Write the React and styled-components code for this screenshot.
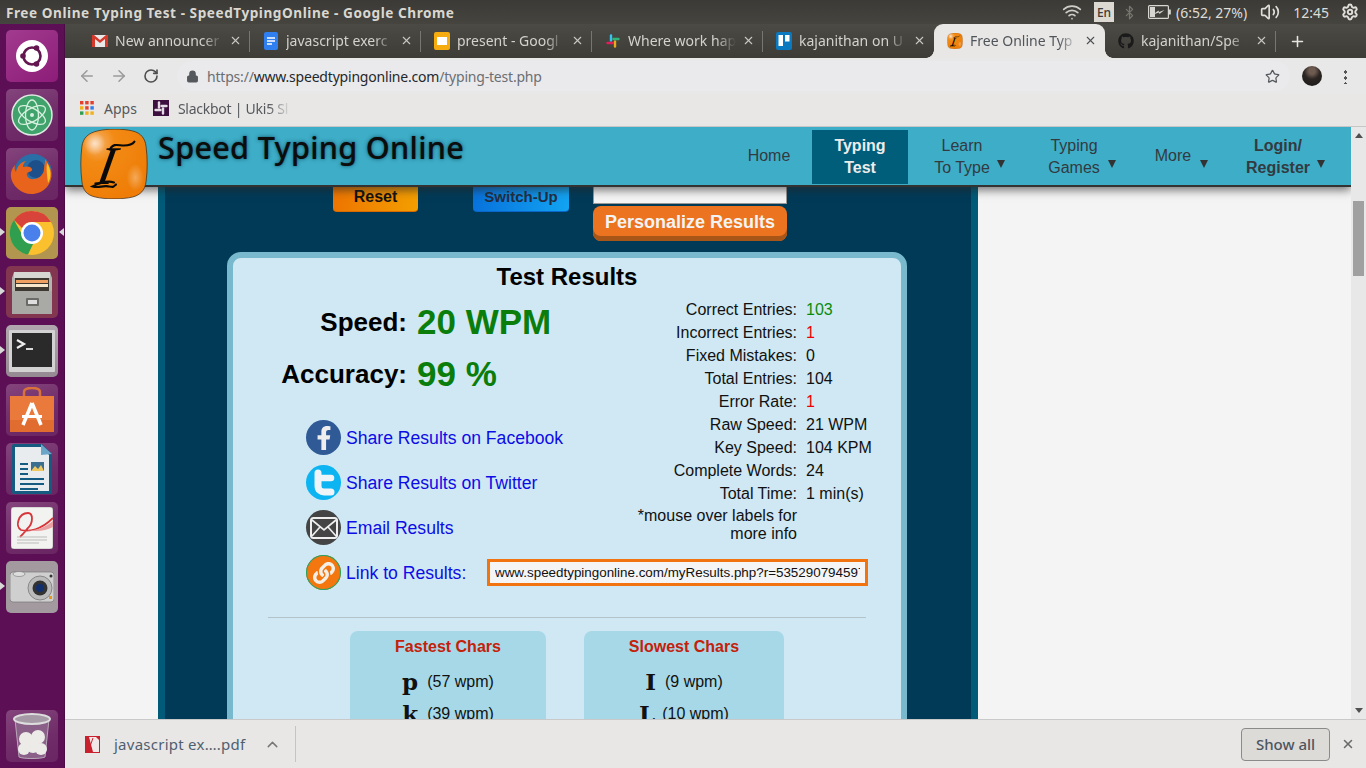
import React from "react";
import styled, { createGlobalStyle } from "styled-components";
import { ArrowLeft, ArrowRight, RotateCw, Lock, Star, ChevronUp, X, Plus, Wifi, Bluetooth, Volume2, Settings } from "lucide-react";
import { FaGithub, FaFacebookF, FaLink } from "react-icons/fa";

const Global = createGlobalStyle`
  html, body { margin: 0; padding: 0; height: 768px; overflow: hidden; background: #5c0f55; }
  * { box-sizing: border-box; }
`;
const UI = `"Noto Sans", "Open Sans", sans-serif`;
const WEB = `"Liberation Sans", Arial, sans-serif`;

const Screen = styled.div`width:1366px;height:768px;display:flex;flex-direction:column;overflow:hidden;font-family:${WEB};`;
const TitleBar = styled.div`height:24px;flex:none;display:flex;align-items:center;padding-left:6px;background:linear-gradient(#3b3a36,#45443f);color:#d9d7d0;font:700 13.6px ${UI};`;
const TitleText = styled.div`flex:1;letter-spacing:.55px;`;
const Indicators = styled.div`display:flex;align-items:center;height:24px;color:#dedcd6;font:400 14px ${UI};`;
const LangBox = styled.div`width:20px;height:20px;margin:0 8px 0 12px;background:#dcd9d3;color:#3c3b37;font-size:12px;font-weight:500;display:flex;align-items:center;justify-content:center;`;
const IndicatorGap = styled.span`width:${p=>p.$w}px;flex:none;`;
const Clock = styled.span`margin:0 12px 0 13px;`;
const BatteryText = styled.span`margin-left:5px;margin-right:13px;`;
const Desktop = styled.div`flex:1;display:flex;min-height:0;`;
const Launcher = styled.div`width:65px;flex:none;background:#5c0f55;border-right:1px solid #4b0c46;display:flex;flex-direction:column;align-items:flex-start;gap:7px;padding:6px 0 6px 6px;`;
const Tile = styled.div`
  width:52px;height:52px;border-radius:5px;flex:none;position:relative;display:flex;align-items:center;justify-content:center;
  background:${p=>p.$bg||"linear-gradient(160deg,#84447c,#6f2c68 60%,#6a2563)"};
  margin-top:${p=>p.$bottom?"auto":"0"};
  ${p=>p.$pip?`&::before{content:"";position:absolute;left:-6px;top:21px;border-left:5px solid #d8d8d8;border-top:4.5px solid transparent;border-bottom:4.5px solid transparent;}`:""}
  ${p=>p.$focus?`&::after{content:"";position:absolute;right:-6px;top:21px;border-right:5px solid #d8d8d8;border-top:4.5px solid transparent;border-bottom:4.5px solid transparent;}`:""}
`;
const Browser = styled.div`flex:1;display:flex;flex-direction:column;min-width:0;`;
const TabStrip = styled.div`height:34px;flex:none;display:flex;padding-left:14px;background:linear-gradient(#4b4a44,#3d3c37);`;
const Tab = styled.div`
  width:171px;flex:none;height:34px;position:relative;display:flex;align-items:center;padding-left:13px;padding-bottom:1px;font:400 14px ${UI};
  color:${p=>p.$active?"#50555b":"#d3d2cc"};
  ${p=>p.$active?`background:#e8e7e5;border-radius:9px 9px 0 0;
    &::before,&::after{content:"";position:absolute;bottom:0;width:8px;height:8px;}
    &::before{left:-8px;background:radial-gradient(circle at 0 0,transparent 7.5px,#e8e7e5 8px);}
    &::after{right:-8px;background:radial-gradient(circle at 100% 0,transparent 7.5px,#e8e7e5 8px);}`:""}
  ${p=>p.$sep?`&::after{content:"";position:absolute;right:0;top:7px;height:21px;width:1px;background:#77766f;}`:""}
`;
const TabIcon = styled.span`width:16px;height:18px;flex:none;display:flex;align-items:center;justify-content:center;`;
const TabLabel = styled.span`
  width:108px;flex:none;margin-left:7px;white-space:nowrap;overflow:hidden;
  mask-image:linear-gradient(90deg,#000 82%,transparent 100%);
`;
const TabClose = styled.span`display:flex;margin-left:6px;color:${p=>p.$active?"#4c4f54":"#c9c8c2"};`;
const NewTab = styled.div`margin-left:13px;display:flex;align-items:center;color:#e6e5e0;`;
const Toolbar = styled.div`height:36px;flex:none;display:flex;align-items:center;background:#e8e8e8;`;
const ToolBtn = styled.span`width:32px;flex:none;display:flex;justify-content:center;color:${p=>p.$dim?"#9a9a9a":"#4e4e4e"};${p=>p.$first?"margin-left:6px;":""}`;
const Omnibox = styled.div`flex:1;height:30px;margin:0 12px 0 10px;padding:0 10px 0 9px;background:#eaeaec;border-radius:15px;display:flex;align-items:center;font:400 14px ${UI};color:#6b6f73;`;
const UrlText = styled.span`margin-left:8px;flex:1;letter-spacing:-.2px;`;
const UrlHost = styled.span`color:#25282b;`;
const Avatar = styled.span`width:20px;height:20px;border-radius:50%;flex:none;background:radial-gradient(circle at 50% 25%,#6d5a50 0 18%,#2b2523 45%,#1a1817);margin-right:22px;`;
const Kebab = styled.span`width:3px;height:15px;margin-right:19px;flex:none;background:radial-gradient(circle,#555 1.5px,transparent 1.7px) 0 0/3px 6px;`;
const BookmarkBar = styled.div`height:32px;flex:none;display:flex;align-items:center;padding:0 0 4px 15px;background:#e8e7e5;font:400 14px ${UI};color:#55585c;`;
const BookmarkLabel = styled.span`margin:0 16px 0 10px;`;
const FadedLabel = styled.span`margin-left:9px;width:113px;letter-spacing:-.25px;white-space:nowrap;overflow:hidden;mask-image:linear-gradient(90deg,#000 80%,transparent 100%);`;
const Viewport = styled.div`flex:1;min-height:0;display:flex;border-top:1px solid #c6c6c6;`;
const Page = styled.div`flex:1;position:relative;overflow:hidden;background:#f4f4f4;`;
const SiteHeader = styled.header`height:60px;position:relative;z-index:2;display:flex;align-items:flex-start;background:#3eadc8;border-bottom:2px solid #333;box-shadow:0 3px 9px rgba(40,40,40,.65);`;
const LogoMark = styled.div`position:absolute;left:14px;top:2px;width:70px;height:72px;z-index:3;`;
const Brand = styled.div`margin:0 0 0 93px;font:500 30.6px "Noto Sans",sans-serif;line-height:40px;color:#0c0c0c;letter-spacing:.3px;text-shadow:0 0 4px #14586b,0 0 1px #14586b;`;
const Nav = styled.nav`margin-left:auto;margin-right:19px;padding-top:3px;display:flex;`;
const NavItem = styled.a`
  width:${p=>p.$w}px;height:54px;position:relative;display:flex;align-items:center;justify-content:center;text-align:center;
  font:${p=>p.$bold||p.$active?700:400} 16px/22px ${WEB};padding-bottom:${p=>p.$single?2:0}px;
  color:${p=>p.$active?"#ececec":"#333a40"};background:${p=>p.$active?"#005e7a":"transparent"};
  ${p=>p.$shift?`padding-right:${p.$shift}px;`:""}
`;
const Caret = styled.i`position:absolute;top:30px;right:${p=>p.$right}px;border-top:8px solid #333;border-left:4.5px solid transparent;border-right:4.5px solid transparent;`;
const Panel = styled.main`margin-left:93px;width:820px;height:600px;background:#003a57;border-left:7px solid #005a78;border-right:7px solid #005a78;`;
const ControlRow = styled.div`display:flex;align-items:flex-start;padding-left:168px;`;
const ResetBtn = styled.button`width:85px;height:25px;border:0;border-bottom:1px solid #d96a00;border-radius:0 0 4px 4px;background:linear-gradient(90deg,#ee7500,#f39f00);font:700 16px ${WEB};color:#111;padding:0 0 5px;`;
const SwitchBtn = styled.button`width:96px;height:25px;margin-left:55px;border:0;border-bottom:1px solid #0a66c8;border-radius:0 0 4px 4px;background:linear-gradient(90deg,#0872dc,#12a4f2);font:700 15px ${WEB};color:#222d40;padding:0 0 6px;`;
const PersonalCol = styled.div`margin-left:24px;width:194px;display:flex;flex-direction:column;gap:2px;`;
const NameInput = styled.div`height:17px;background:#f5f5f5;border:1px solid #999;border-top:0;`;
const PersonalBtn = styled.button`height:35px;width:194px;border:0;border-radius:8px;background:#ec7420;box-shadow:inset 0 -5px 0 #a85518;font:700 18px ${WEB};color:#f3f3f3;padding:0 0 3px;`;
const Card = styled.section`margin:11px 0 0 62px;width:680px;height:500px;background:#cfe8f4;border:6px solid #78b9cd;border-radius:14px 14px 0 0;color:#111;`;
const CardTitle = styled.h2`margin:0;padding-top:5px;height:33px;text-align:center;font:700 24px/28px ${WEB};color:#000;`;
const ResultGrid = styled.div`display:grid;grid-template-columns:399px 1fr;padding-top:4px;`;
const MainStat = styled.div`height:52px;display:flex;align-items:center;padding-top:2px;`;
const MainLabel = styled.div`width:174px;text-align:right;font:700 26px ${WEB};color:#000;`;
const MainValue = styled.div`margin-left:10px;font:700 35px ${WEB};color:#0a7d0a;`;
const ShareRows = styled.div`margin-top:16px;`;
const ShareRow = styled.div`height:45px;display:flex;align-items:center;padding-left:73px;`;
const Badge = styled.span`width:35px;height:35px;flex:none;border-radius:50%;display:flex;align-items:center;justify-content:center;background:${p=>p.$bg};color:#eee;overflow:hidden;${p=>p.$ring?`box-shadow:0 0 0 1px ${p.$ring} inset;`:""}`;
const ShareLink = styled.a`margin-left:5px;padding-top:2px;font:400 17.6px ${WEB};color:#0c0ce6;white-space:nowrap;${p=>p.$w?`width:${p.$w}px;flex:none;`:""}`;
const Stats = styled.dl`margin:0;padding-top:3px;display:grid;grid-template-columns:165px 1fr;column-gap:9px;align-content:start;font:400 16px/23px ${WEB};`;
const StatLabel = styled.dt`text-align:right;color:#111;`;
const StatValue = styled.dd`margin:0;color:${p=>p.$c||"#111"};`;
const Note = styled.div`grid-column:1;text-align:right;font:400 16px/18px ${WEB};color:#111;margin-top:2px;padding-left:5px;`;
const UrlBox = styled.div`width:381px;height:27px;flex:none;border:3px solid #f27410;background:#f5f5f5;padding:0 5px;font:400 13.4px/21px ${WEB};color:#111;`;
const UrlClip = styled.div`overflow:hidden;white-space:nowrap;`;
const Rule = styled.div`height:1px;background:#b2c4ca;margin:22px 0 0 35px;width:598px;`;
const CharBoxes = styled.div`display:flex;gap:38px;margin:13px 0 0 117px;`;
const CharBox = styled.div`width:${p=>p.$w}px;height:160px;background:#a6d8e7;border-radius:8px;padding-top:6px;`;
const CharTitle = styled.div`text-align:center;font:700 16px/19px ${WEB};color:#c4210a;margin-bottom:10px;`;
const CharRow = styled.div`height:32px;display:flex;align-items:center;justify-content:center;gap:${p=>p.$gap||9}px;font:400 16px ${WEB};color:#111;`;
const CharGlyph = styled.span`font:700 23px/32px "DejaVu Serif",serif;color:#111;`;
const Scrollbar = styled.div`width:15px;flex:none;background:#e8e8e8;display:flex;flex-direction:column;align-items:center;padding:6px 0;`;
const ScrollUp = styled.i`border-bottom:5px solid #505050;border-left:4.5px solid transparent;border-right:4.5px solid transparent;`;
const ScrollDown = styled.i`margin-top:auto;border-top:5px solid #505050;border-left:4.5px solid transparent;border-right:4.5px solid transparent;`;
const Thumb = styled.div`width:11px;height:75px;margin-top:63px;background:#a0a0a0;`;
const DownloadBar = styled.div`height:49px;flex:none;background:#e8e7e5;border-top:1px solid #c9c9c9;display:flex;align-items:center;padding-left:20px;font:400 15px ${UI};color:#4f5f70;`;
const FileName = styled.span`margin-left:14px;width:150px;letter-spacing:.25px;`;
const Chevron = styled.span`display:flex;color:#777;width:24px;flex:none;`;
const VSep = styled.span`width:1px;height:36px;background:#c4c4c4;margin-left:7px;`;
const ShowAll = styled.button`margin-left:auto;width:89px;height:33px;border:1px solid #8a8a8a;border-radius:4px;background:#dddbd8;font:500 15px ${UI};color:#4c5560;padding:0;`;
const BarClose = styled.span`display:flex;margin:0 11px 0 11px;color:#6b6b6b;`;

const Gmail = () => (<svg width="16" height="14" viewBox="0 0 16 14"><rect y="1" width="16" height="12" fill="#e8e8e8"/><path d="M0 1v12h3V5l5 4 5-4v8h3V1h-2L8 6 2 1z" fill="#d4392b"/></svg>);
const Docs = () => (<svg width="14" height="18" viewBox="0 0 14 18"><rect width="14" height="18" rx="2" fill="#2f7ff0"/><path d="M3 6h8M3 9h8M3 12h5" stroke="#fff" strokeWidth="1.5"/></svg>);
const Slides = () => (<svg width="16" height="18" viewBox="0 0 16 18"><rect width="16" height="18" rx="2" fill="#f6ab0e"/><rect x="3" y="5" width="10" height="8" fill="#fff"/></svg>);
const Slack = ({bg}) => (<svg width="16" height="16" viewBox="0 0 16 16">{bg&&<rect width="16" height="16" fill="#3e1040"/>}<g strokeWidth="2.4" strokeLinecap="round" fill="none"><path d="M6 2.5v5" stroke={bg?"#e6dce6":"#36c5f0"}/><path d="M2.5 10h5" stroke={bg?"#e6dce6":"#e01e5a"}/><path d="M10 8.5v5" stroke={bg?"#e6dce6":"#e8a91a"}/><path d="M8.5 6h5" stroke={bg?"#e6dce6":"#2eb67d"}/></g></svg>);
const Trello = () => (<svg width="16" height="18" viewBox="0 0 16 18"><rect width="16" height="18" rx="2" fill="#0b79bf"/><rect x="2.5" y="3" width="4.5" height="11" fill="#fff"/><rect x="9" y="3" width="4.5" height="6.5" fill="#fff"/></svg>);
const Swash = ({size}) => (
  <svg width={size} height={size} viewBox="0 0 70 72">
    <defs>
      <radialGradient id={"lg"+size} cx=".25" cy=".2" r=".9"><stop offset="0" stopColor="#f6b26a"/><stop offset=".3" stopColor="#f28a14"/><stop offset="1" stopColor="#ee7c06"/></radialGradient>
      <radialGradient id={"hi"+size}><stop offset="0" stopColor="#fff" stopOpacity=".65"/><stop offset="1" stopColor="#fff" stopOpacity="0"/></radialGradient>
    </defs>
    <path d="M18 2C28-.5 44-.5 54 2c9 2 13 8 14 16 1.500 11 1.500 25 0 36-1 9-6 14-14 16-10 2.500-28 2.500-38 0C7 68 3 63 2 54 .5 43 .5 29 2 18 3 9 9 4 18 2z" fill={"url(#lg"+size+")"} stroke="#3a2410" strokeWidth=".7"/>
    <ellipse cx="15" cy="15" rx="11" ry="12" fill={"url(#hi"+size+")"}/>
    <ellipse cx="57" cy="50" rx="9" ry="14" fill={"url(#hi"+size+")"} opacity=".5"/>
    <text x="16" y="57" transform="skewX(-10) translate(9 0)" fontFamily="Liberation Serif" fontStyle="italic" fontSize="56" fill="#0a0a0a">I</text>
    <path d="M31 21c3-7 9-4 14-4s9-1 11-4M35 55c-6-2-14 0-22 4 6 2 10-1 16 0s5 1 8-2" stroke="#0a0a0a" strokeWidth="2.2" fill="none" strokeLinecap="round"/>
  </svg>
);
const UbuntuIcon = () => (<svg width="34" height="34" viewBox="0 0 34 34"><circle cx="17" cy="17" r="16" fill="#fff"/><circle cx="17" cy="17" r="8.500" fill="none" stroke="#63164f" strokeWidth="2.6"/><circle cx="8" cy="17" r="2.800" fill="#63164f"/><circle cx="21.5" cy="9" r="2.800" fill="#63164f"/><circle cx="21.5" cy="25" r="2.800" fill="#63164f"/></svg>);
const AtomIcon = () => (<svg width="42" height="42" viewBox="0 0 42 42"><circle cx="21" cy="21" r="20" fill="#3fa36b" stroke="#dfe9e2" strokeWidth="1.500"/><g fill="none" stroke="#d7f0df" strokeWidth="1.300"><ellipse cx="21" cy="21" rx="15" ry="6.500" transform="rotate(30 21 21)"/><ellipse cx="21" cy="21" rx="15" ry="6.500" transform="rotate(-30 21 21)"/><ellipse cx="21" cy="21" rx="15" ry="6.500" transform="rotate(90 21 21)"/></g><circle cx="21" cy="21" r="2" fill="#d7f0df"/></svg>);
const FirefoxIcon = () => (<svg width="46" height="46" viewBox="0 0 46 46"><circle cx="24" cy="22" r="19" fill="#2a6ea8"/><circle cx="27" cy="18" r="9" fill="#1d4f8a"/><path d="M36 8c7 8 9 20 2 28S18 46 9 38 0 20 6 14c-1 4 0 6 1 7 1-6 5-10 10-11-3 3-3 5-3 6 3-1 8-1 9 2 1 2-3 3-5 4-1 3 2 7 7 6 5 0 10-5 10-10 0-3 1-5 1-8z" fill="#e8641c"/><path d="M38 12c4 6 5 14 1 20-1-8-2-14-1-20z" fill="#f9c32a"/></svg>);
const ChromeIcon = () => (<svg width="46" height="46" viewBox="0 0 46 46"><circle cx="23" cy="23" r="22" fill="#fbc02d"/><path d="M23 1a22 22 0 0 1 19 11H23a11 11 0 0 0-10 6L5 10A22 22 0 0 1 23 1z" fill="#d9443a"/><path d="M5 10l9.500 17a10 10 0 0 0 10 6L19 44.600A22 22 0 0 1 5 10z" fill="#2f9e4f"/><circle cx="23" cy="23" r="11" fill="#fff"/><circle cx="23" cy="23" r="8.500" fill="#4a80ec"/></svg>);
const FilesIcon = () => (<svg width="42" height="46" viewBox="0 0 42 46"><path d="M3 3h36l2 6v36H1V9z" fill="#b4b4b0"/><rect x="3" y="3" width="36" height="6" fill="#d6d6d2"/><rect x="4" y="9" width="34" height="13" fill="#3d3830"/><rect x="5" y="11" width="32" height="3" fill="#f0a060"/><rect x="5" y="15" width="32" height="3" fill="#f7e7c8"/><path d="M1 22h40v23H1z" fill="#a9a9a5"/><rect x="15" y="29" width="13" height="8" rx="1" fill="#6a6a66"/><rect x="17" y="31" width="9" height="4" fill="#dedede"/></svg>);
const TermIcon = () => (<svg width="46" height="42" viewBox="0 0 46 42"><rect width="46" height="42" rx="1" fill="#d2d2d2"/><rect x="3" y="3" width="40" height="34" fill="#2a2a2a"/><path d="M8 10l7 4-7 4" stroke="#eee" strokeWidth="2.200" fill="none"/><path d="M17 19h7" stroke="#eee" strokeWidth="1.800"/></svg>);
const StoreIcon = () => (<svg width="44" height="46" viewBox="0 0 44 46"><path d="M14 10V5c0-3 3-4 8-4s8 1 8 4v5" fill="none" stroke="#d8723a" strokeWidth="2.500"/><rect y="9" width="44" height="36" fill="#ea7a3c"/><rect y="33" width="44" height="12" fill="#e06c30"/><path d="M22 16l9 22M22 16l-9 22" stroke="#fff" strokeWidth="3.500"/><rect x="12" y="28" width="20" height="3" fill="#fff"/></svg>);
const WriterIcon = () => (<svg width="40" height="50" viewBox="0 0 40 50"><path d="M2 0h28l10 10v38a2 2 0 0 1-2 2H2a2 2 0 0 1-2-2V2a2 2 0 0 1 2-2z" fill="#155a80"/><path d="M3 3h26l8 8v36H3z" fill="#e9ecee"/><path d="M29 0l11 10-11 1z" fill="#6ba6c8"/><path d="M8 20h8M8 25h8M8 30h8M8 35h24M8 40h24M8 45h18" stroke="#155a80" strokeWidth="2"/><rect x="19" y="18" width="13" height="9" fill="#3c6e90"/><path d="M19 27l4-5 3 3 3-4 3 6z" fill="#f0c860"/></svg>);
const PdfIcon = () => (<svg width="42" height="42" viewBox="0 0 42 42"><rect width="42" height="42" rx="3" fill="#f2f2f0" stroke="#999" strokeWidth=".6"/><path d="M42 11c-12 12-24 14-32 12-6-3-3-17 7-17 5 0 6 10-1 16-2 3-4 5-7 8" fill="none" stroke="#d6353a" strokeWidth="1.800"/><path d="M16 23c10 1 18-3 26-9v6c-8 4-16 5-26 3z" fill="#e9a0a0"/><path d="M6 30h30M6 33h30M6 36h22" stroke="#bbb" strokeWidth="1"/></svg>);
const CameraIcon = () => (<svg width="44" height="34" viewBox="0 0 44 34"><rect y="2" width="44" height="30" rx="3" fill="#cfcfcf" stroke="#777" strokeWidth=".7"/><ellipse cx="9" cy="4" rx="6" ry="2.500" fill="#ddd" stroke="#777" strokeWidth=".6"/><circle cx="30" cy="18" r="12" fill="#bbb" stroke="#888"/><circle cx="30" cy="18" r="7.500" fill="#333"/><circle cx="30" cy="18" r="4" fill="#12306e"/><circle cx="41" cy="6" r="1.500" fill="#333"/><rect x="39" y="26" width="3" height="3" fill="#e8961c"/></svg>);
const TrashIcon = () => (<svg width="38" height="46" viewBox="0 0 38 46"><path d="M2 6l4 38c4 2 22 2 26 0l4-38z" fill="#8a5f88" stroke="#b8a8b8"/><ellipse cx="19" cy="6" rx="18" ry="5" fill="#a69aa6" stroke="#ddd" strokeWidth="2"/><g fill="#ecebe8"><circle cx="13" cy="26" r="7"/><circle cx="25" cy="24" r="7"/><circle cx="11" cy="36" r="6"/><circle cx="20" cy="33" r="7"/><circle cx="28" cy="36" r="6"/></g></svg>);
const TwitterT = () => (<svg width="24" height="28" viewBox="0 0 24 28"><path d="M6 4v13c0 4 3 6 6 6h7" fill="none" stroke="#eef4f8" strokeWidth="7" strokeLinecap="round"/><path d="M7 9h12" stroke="#eef4f8" strokeWidth="6.500" strokeLinecap="round"/></svg>);
const Envelope = () => (<svg width="28" height="22" viewBox="0 0 28 22"><rect x="1" y="1" width="26" height="20" rx="2.500" fill="none" stroke="#eee" strokeWidth="2"/><path d="M2 3l12 10L26 3M2 19l8-9M26 19l-8-9" fill="none" stroke="#eee" strokeWidth="1.700"/></svg>);
const AppsGrid = () => (<svg width="14" height="14" viewBox="0 0 14 14">{[["#e3402e","#e3402e","#e3402e"],["#f2b11c","#e3402e","#2f7ff0"],["#2f9e4f","#f2b11c","#f2b11c"]].map((r,i)=>r.map((c,j)=><rect key={i+"-"+j} x={j*5.2} y={i*5.2} width="3.400" height="3.400" fill={c}/>))}</svg>);
const PdfFile = () => (<svg width="15" height="17" viewBox="0 0 15 17"><rect width="15" height="17" fill="#c8202c"/><path d="M4 1h7l3 3v12H8z" fill="#f2e8e8"/><path d="M3 16l5-14" stroke="#c8202c"/></svg>);
const BatteryGlyph = () => (<svg width="23" height="14" viewBox="0 0 23 14"><rect x=".6" y=".6" width="19.800" height="12.800" rx="1" fill="none" stroke="#d8d6d0" strokeWidth="1.200"/><rect x="2" y="2" width="5" height="10" fill="#d8d6d0"/><rect x="20.800" y="4.500" width="2" height="5" fill="#d8d6d0"/><path d="M5 9.500l6-2 .5 1.500 5-4-5.500 2-.5-1.500z" fill="#d8d6d0"/></svg>);

const tabs = [
  { icon:<Gmail/>, label:"New announcer" },
  { icon:<Docs/>, label:"javascript exerc" },
  { icon:<Slides/>, label:"present - Googl" },
  { icon:<Slack/>, label:"Where work hap" },
  { icon:<Trello/>, label:"kajanithan on U" },
  { icon:<Swash size={16}/>, label:"Free Online Typ", active:true },
  { icon:<FaGithub size={16} color="#1a1a1a"/>, label:"kajanithan/Spe", last:true },
];
const stats = [["Correct Entries:","103","#0a8a0a"],["Incorrect Entries:","1","#ee0000"],["Fixed Mistakes:","0"],["Total Entries:","104"],["Error Rate:","1","#ee0000"],["Raw Speed:","21 WPM"],["Key Speed:","104 KPM"],["Complete Words:","24"],["Total Time:","1 min(s)"]];

export default function App() {
  return (
    <Screen>
      <Global/>
      <TitleBar>
        <TitleText>Free Online Typing Test - SpeedTypingOnline - Google Chrome</TitleText>
        <Indicators>
          <Wifi size={20} color="#cfcdc7"/>
          <LangBox>En</LangBox>
          <Bluetooth size={15} color="#77766f"/>
          <IndicatorGap $w={11}/>
          <BatteryGlyph/>
          <BatteryText>(6:52, 27%)</BatteryText>
          <Volume2 size={20} color="#e0ded8"/>
          <Clock>12:45</Clock>
          <Settings size={18} color="#e0ded8" strokeWidth={2.6}/>
          <IndicatorGap $w={7}/>
        </Indicators>
      </TitleBar>
      <Desktop>
        <Launcher>
          <Tile $bg="linear-gradient(145deg,#a23b8f,#8d1c78)"><UbuntuIcon/></Tile>
          <Tile><AtomIcon/></Tile>
          <Tile><FirefoxIcon/></Tile>
          <Tile $pip $focus $bg="#b2964f"><ChromeIcon/></Tile>
          <Tile $pip $bg="#83364f"><FilesIcon/></Tile>
          <Tile $pip $bg="linear-gradient(#b0a8ae,#958a91)"><TermIcon/></Tile>
          <Tile><StoreIcon/></Tile>
          <Tile><WriterIcon/></Tile>
          <Tile><PdfIcon/></Tile>
          <Tile $pip $bg="#a39aa0"><CameraIcon/></Tile>
          <Tile $bottom><TrashIcon/></Tile>
        </Launcher>
        <Browser>
          <TabStrip>
            {tabs.map((t,i)=>(
              <Tab key={t.label} $active={t.active} $sep={!t.active && i!==4}>
                <TabIcon>{t.icon}</TabIcon>
                <TabLabel>{t.label}</TabLabel>
                <TabClose $active={t.active}><X size={13}/></TabClose>
              </Tab>
            ))}
            <NewTab><Plus size={17} strokeWidth={2.2}/></NewTab>
          </TabStrip>
          <Toolbar>
            <ToolBtn $dim $first><ArrowLeft size={18}/></ToolBtn>
            <ToolBtn $dim><ArrowRight size={18}/></ToolBtn>
            <ToolBtn><RotateCw size={16} strokeWidth={2.4}/></ToolBtn>
            <Omnibox>
              <Lock size={13} color="#55585c" fill="#55585c"/>
              <UrlText>https://<UrlHost>www.speedtypingonline.com</UrlHost>/typing-test.php</UrlText>
              <Star size={15} color="#55585c" strokeWidth={2}/>
            </Omnibox>
            <Avatar/>
            <Kebab/>
          </Toolbar>
          <BookmarkBar>
            <AppsGrid/>
            <BookmarkLabel>Apps</BookmarkLabel>
            <Slack bg/>
            <FadedLabel>Slackbot | Uki5 Sl</FadedLabel>
          </BookmarkBar>
          <Viewport>
            <Page>
              <LogoMark><Swash size={70}/></LogoMark>
              <SiteHeader>
                <Brand>Speed Typing Online</Brand>
                <Nav>
                  <NavItem $w={86} $single>Home</NavItem>
                  <NavItem $w={96} $active>Typing<br/>Test</NavItem>
                  <NavItem $w={108}>Learn<br/>To Type<Caret $right={11}/></NavItem>
                  <NavItem $w={116}>Typing<br/>Games<Caret $right={16}/></NavItem>
                  <NavItem $w={92} $shift={10} $single>More<Caret $right={16}/></NavItem>
                  <NavItem $w={108} $bold>Login/<br/>Register<Caret $right={7}/></NavItem>
                </Nav>
              </SiteHeader>
              <Panel>
                <ControlRow>
                  <ResetBtn>Reset</ResetBtn>
                  <SwitchBtn>Switch-Up</SwitchBtn>
                  <PersonalCol>
                    <NameInput/>
                    <PersonalBtn>Personalize Results</PersonalBtn>
                  </PersonalCol>
                </ControlRow>
                <Card>
                  <CardTitle>Test Results</CardTitle>
                  <ResultGrid>
                    <div>
                      <MainStat><MainLabel>Speed:</MainLabel><MainValue>20 WPM</MainValue></MainStat>
                      <MainStat><MainLabel>Accuracy:</MainLabel><MainValue>99 %</MainValue></MainStat>
                      <ShareRows>
                        <ShareRow><Badge $bg="#2f5a96"><FaFacebookF size={24}/></Badge><ShareLink>Share Results on Facebook</ShareLink></ShareRow>
                        <ShareRow><Badge $bg="#0cb4f2"><TwitterT/></Badge><ShareLink>Share Results on Twitter</ShareLink></ShareRow>
                        <ShareRow><Badge $bg="#444"><Envelope/></Badge><ShareLink>Email Results</ShareLink></ShareRow>
                      </ShareRows>
                    </div>
                    <Stats>
                      {stats.map(([l,v,c])=>(
                        <React.Fragment key={l}><StatLabel>{l}</StatLabel><StatValue $c={c}>{v}</StatValue></React.Fragment>
                      ))}
                      <Note>*mouse over labels for more info</Note>
                    </Stats>
                  </ResultGrid>
                  <ShareRow>
                    <Badge $bg="#f4760e" $ring="#1fa56a"><FaLink size={22} color="#f4efe6"/></Badge>
                    <ShareLink $w={141}>Link to Results:</ShareLink>
                    <UrlBox><UrlClip>www.speedtypingonline.com/myResults.php?r=535290794597</UrlClip></UrlBox>
                  </ShareRow>
                  <Rule/>
                  <CharBoxes>
                    <CharBox $w={196}>
                      <CharTitle>Fastest Chars</CharTitle>
                      <CharRow><CharGlyph>p</CharGlyph><span>(57 wpm)</span></CharRow>
                      <CharRow><CharGlyph>k</CharGlyph><span>(39 wpm)</span></CharRow>
                    </CharBox>
                    <CharBox $w={200}>
                      <CharTitle>Slowest Chars</CharTitle>
                      <CharRow><CharGlyph>I</CharGlyph><span>(9 wpm)</span></CharRow>
                      <CharRow $gap={7}><CharGlyph>L</CharGlyph><span>(10 wpm)</span></CharRow>
                    </CharBox>
                  </CharBoxes>
                </Card>
              </Panel>
            </Page>
            <Scrollbar>
              <ScrollUp/>
              <Thumb/>
              <ScrollDown/>
            </Scrollbar>
          </Viewport>
          <DownloadBar>
            <PdfFile/>
            <FileName>javascript ex….pdf</FileName>
            <Chevron><ChevronUp size={17}/></Chevron>
            <VSep/>
            <ShowAll>Show all</ShowAll>
            <BarClose><X size={14} strokeWidth={2.6}/></BarClose>
          </DownloadBar>
        </Browser>
      </Desktop>
    </Screen>
  );
}
